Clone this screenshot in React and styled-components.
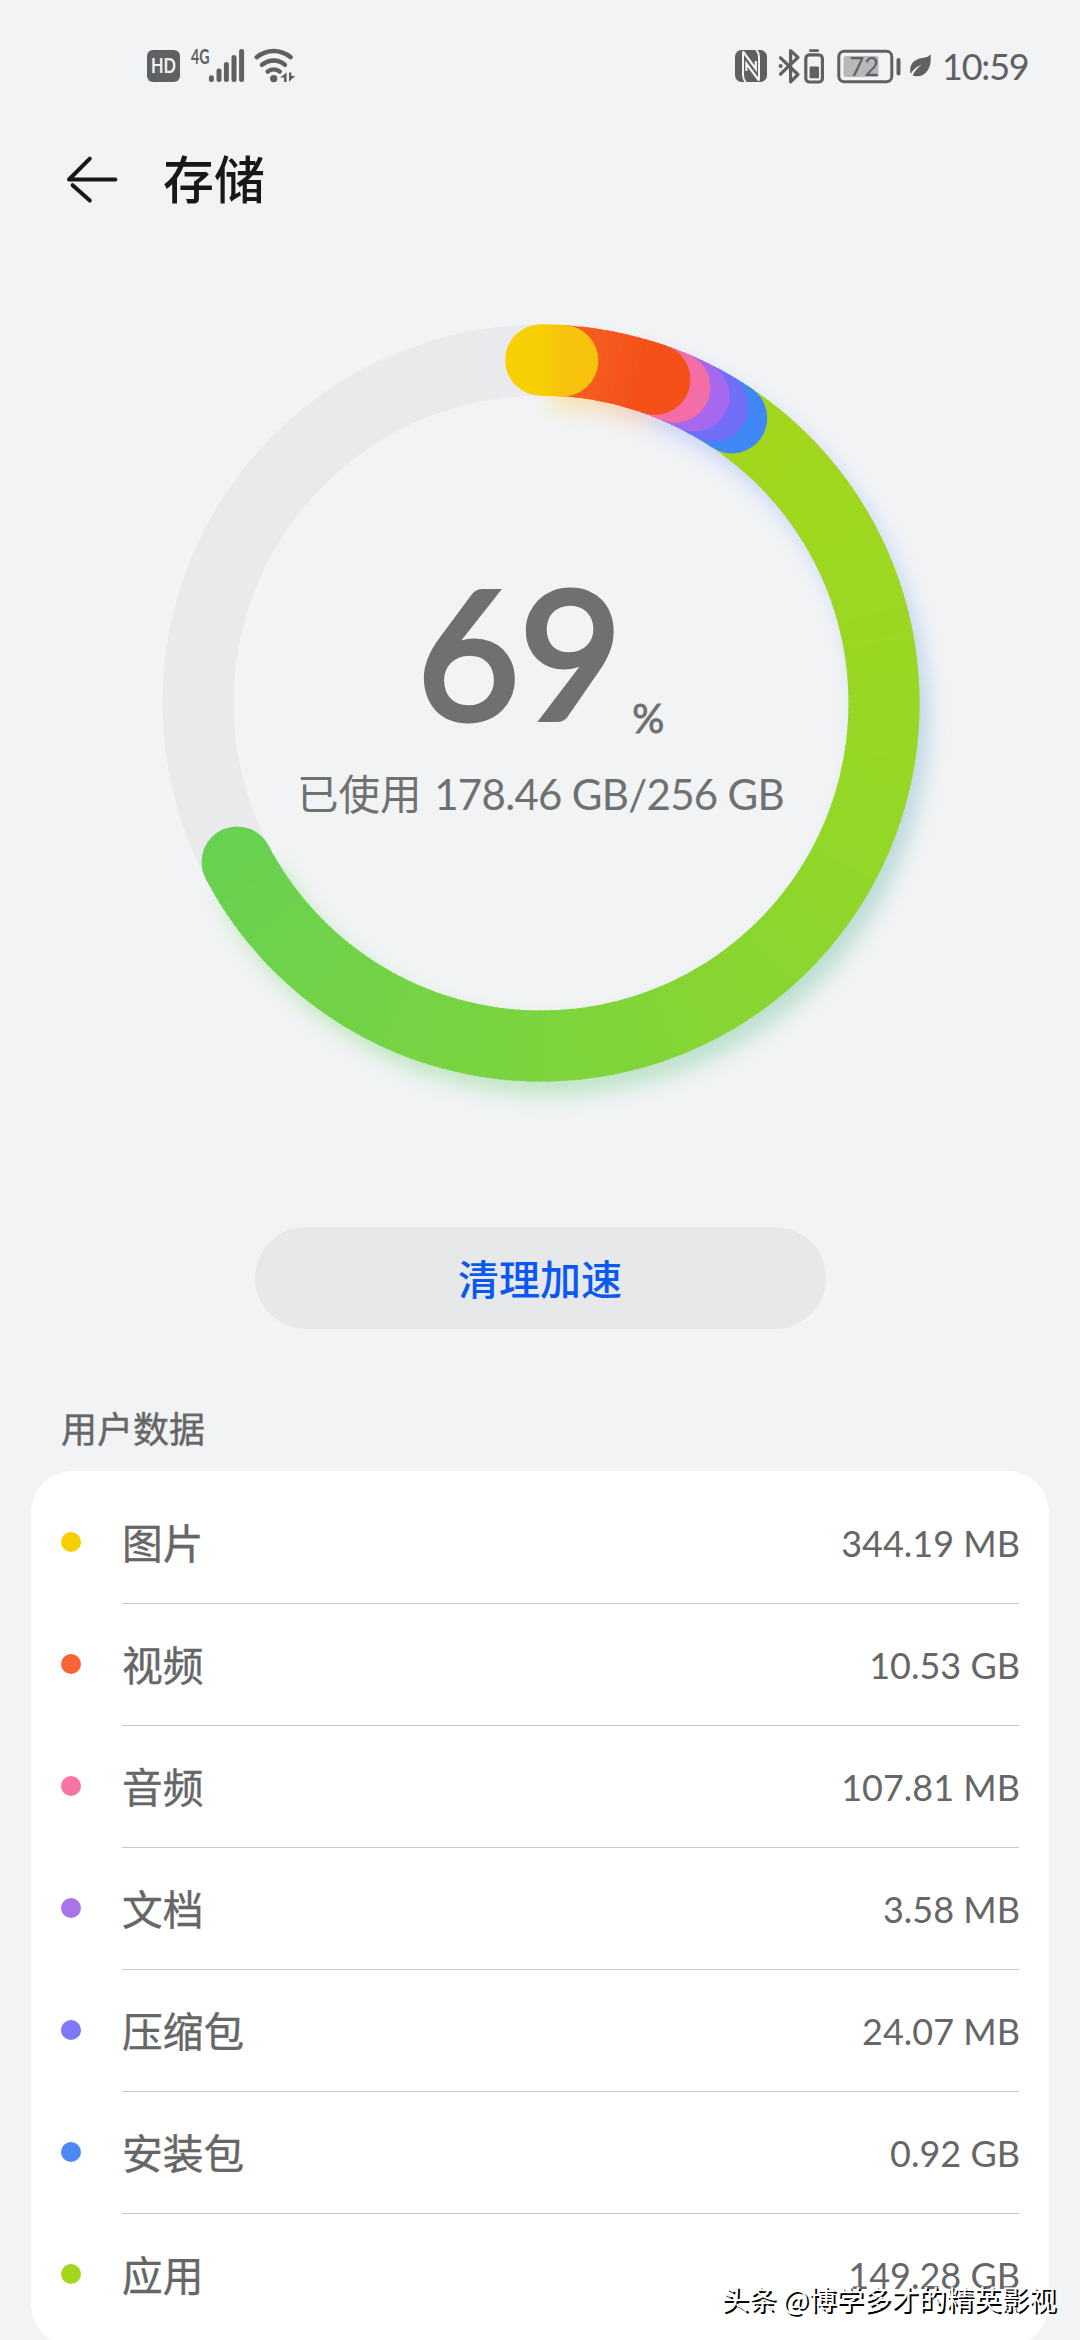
import styled, { createGlobalStyle } from "styled-components";

const categories = [
  { name: "图片", size: "344.19 MB", color: "#f7cf00" },
  { name: "视频", size: "10.53 GB", color: "#f86434" },
  { name: "音频", size: "107.81 MB", color: "#f873a6" },
  { name: "文档", size: "3.58 MB", color: "#a974ea" },
  { name: "压缩包", size: "24.07 MB", color: "#7d79f8" },
  { name: "安装包", size: "0.92 GB", color: "#4b8af3" },
  { name: "应用", size: "149.28 GB", color: "#a5d61d" },
];

const RADIUS = 343;
const CENTER = 400;

// drawn from the last one to the first, so each cap lies over the next arc
const segments = [
  { from: 30, to: 242.4, stops: [[34, "#a4d71c"], [110, "#94d727"], [180, "#7cd43d"], [242, "#69d150"]] },
  { from: 27, to: 33.8, stops: [[0, "#4188f7"]] },
  { from: 23, to: 30.1, stops: [[0, "#716ff8"]] },
  { from: 19, to: 26.5, stops: [[0, "#a568ef"]] },
  { from: 15, to: 23, stops: [[0, "#f36da6"]] },
  { from: 3, to: 19.4, stops: [[8, "#f65c20"], [17, "#f45018"]] },
];

const shadowStops = [
  [0, "#f8e070"],
  [8, "#fbc890"],
  [14, "#f9b08c"],
  [21, "#a9bcff"],
  [60, "#a3c1f8"],
  [90, "#93c0d8"],
  [130, "#92ccb4"],
  [180, "#98dba0"],
  [242, "#9be28c"],
];

function point(angle) {
  const rad = (angle * Math.PI) / 180;
  return [CENTER + RADIUS * Math.sin(rad), CENTER - RADIUS * Math.cos(rad)];
}

function arcPath(from, to) {
  const [x1, y1] = point(from);
  const [x2, y2] = point(to);
  return `M${x1} ${y1}A${RADIUS} ${RADIUS} 0 ${to - from > 180 ? 1 : 0} 1 ${x2} ${y2}`;
}

function channels(hex) {
  return [1, 3, 5].map((i) => parseInt(hex.slice(i, i + 2), 16));
}

function colorAt(stops, angle) {
  if (angle <= stops[0][0]) return stops[0][1];
  for (let i = 1; i < stops.length; i++) {
    if (angle <= stops[i][0]) {
      const [a, c1] = stops[i - 1];
      const [b, c2] = stops[i];
      const t = (angle - a) / (b - a);
      const end = channels(c2);
      return `rgb(${channels(c1).map((v, k) => Math.round(v + (end[k] - v) * t))})`;
    }
  }
  return stops[stops.length - 1][1];
}

function Arc({ from, to, stops, step = 1, cap = true }) {
  const slices = [];
  for (let a = from; a < to; a += step) {
    slices.push(
      <path
        key={a}
        d={arcPath(a, Math.min(a + step + 0.3, to))}
        stroke={colorAt(stops, a)}
      />
    );
  }
  const [x, y] = point(to);
  return (
    <g fill="none" strokeWidth="71">
      {cap && <circle cx={x} cy={y} r="35.5" fill={colorAt(stops, to)} />}
      {slices}
    </g>
  );
}

function StorageRing() {
  return (
    <RingArea>
      <svg width="800" height="800" viewBox="0 0 800 800">
        <defs>
          <filter id="soft" x="-10%" y="-10%" width="120%" height="120%">
            <feGaussianBlur stdDeviation="10" />
          </filter>
          <linearGradient id="pictures" gradientUnits="userSpaceOnUse" x1="399" y1="0" x2="420" y2="0">
            <stop offset="0" stopColor="#f6d002" />
            <stop offset="1" stopColor="#f7c30d" />
          </linearGradient>
        </defs>
        <circle cx={CENTER} cy={CENTER} r={RADIUS} fill="none" stroke="#e9eaec" strokeWidth="71" />
        <g filter="url(#soft)" opacity="0.55" transform="translate(9 14)">
          <Arc from={0} to={241} stops={shadowStops} step={3} cap={false} />
        </g>
        {segments.map((segment) => (
          <Arc key={segment.to} {...segment} />
        ))}
        <path d={arcPath(0, 3.6)} fill="none" stroke="url(#pictures)" strokeWidth="71.6" strokeLinecap="round" />
      </svg>
      <RingText>
        <Percent>
          <span>69</span>
          <small>%</small>
        </Percent>
        <Usage>
          已使用 <b>178.46 GB/256 GB</b>
        </Usage>
      </RingText>
    </RingArea>
  );
}

function StatusBar() {
  return (
    <Status>
      <StatusGroup>
        <Icon width="33" height="32" viewBox="0 0 33 32">
          <rect width="33" height="32" rx="6" fill="#5f6062" />
          <StatusText x="4" y="23.3" fontSize="20" textLength="25" lengthAdjust="spacingAndGlyphs" $color="#f1f3f5" $bold>
            HD
          </StatusText>
        </Icon>
        <Icon $gap="10px" width="56" height="36" viewBox="190 48 56 36">
          <StatusText x="191" y="63.8" fontSize="20.5" textLength="18.5" lengthAdjust="spacingAndGlyphs" $bold>
            4G
          </StatusText>
          <g stroke="#5f6062" strokeWidth="5" strokeLinecap="round">
            <path d="M211.4 77.8V79.4M219 71V79.4M226.4 64.4V79.4M234 57.6V79.4M241.6 51.5V79.4" />
          </g>
        </Icon>
        <Icon $gap="8px" width="42" height="36" viewBox="254 48 42 36">
          <g fill="none" stroke="#5f6062" strokeWidth="4.4" strokeLinecap="round">
            <path d="M256.7 57.2Q264.5 51 273.7 51T290.7 57.2" />
            <path d="M262 64.8Q267.3 60.5 273.7 60.5T285 64.8" />
            <path d="M267.6 71.6Q270 69.4 273.7 69.4T279.8 71.6" />
          </g>
          <circle cx="273.7" cy="78.6" r="3.7" fill="#5f6062" />
          <path d="M280 77.4L286.6 72.6V82H284V77.4ZM295.2 76L289 81.8V72.6H291.4V76Z" fill="#5f6062" />
        </Icon>
      </StatusGroup>
      <StatusGroup>
        <Icon width="32" height="32" viewBox="0 0 32 32">
          <rect width="32" height="32" rx="6.5" fill="#5f6062" />
          <g fill="none" stroke="#f1f3f5" strokeWidth="2">
            <path d="M8 1.5V25Q8 29 10.8 32.4" />
            <path d="M21.2 -0.4Q24 3 24 7V30.5" />
            <path d="M8 1.5L20.8 19V11" strokeWidth="2.2" />
            <path d="M11.4 21V13.5L24 30.5" strokeWidth="2.2" />
          </g>
        </Icon>
        <Icon $gap="11px" width="46" height="36" viewBox="777 48 46 36">
          <g fill="none" stroke="#5f6062" strokeWidth="3.2" strokeLinejoin="round" strokeLinecap="round">
            <path d="M779.5 57.8L797 74.5L789.6 81.8V50.6L797 57.4L779.5 74.2" />
            <rect x="804.8" y="54.8" width="16.6" height="27.2" rx="3.6" />
            <path d="M809.4 50.6H816.8" strokeWidth="2.6" />
          </g>
          <circle cx="779.6" cy="66" r="2" fill="#5f6062" />
          <rect x="808.6" y="66.6" width="9.4" height="11.6" rx="1" fill="#5f6062" />
        </Icon>
        <Icon $gap="12.5px" width="64" height="36" viewBox="835.5 48 64 36">
          <rect x="837.3" y="51.3" width="53" height="30.4" rx="5.4" fill="none" stroke="#5f6062" strokeWidth="3" />
          <rect x="842" y="56" width="35" height="21" rx="2.5" fill="#b6b8ba" />
          <rect x="895" y="58" width="4" height="17.6" rx="2" fill="#5f6062" />
          <StatusText x="848" y="76.4" fontSize="27.5" textLength="29.5" lengthAdjust="spacingAndGlyphs">
            72
          </StatusText>
        </Icon>
        <Icon $gap="9.5px" width="22" height="24" viewBox="909 55 22 24">
          <path
            d="M929.7 55.4Q930.5 66 926.6 71.4Q922.4 77.2 916 77.3Q913 77.4 911.6 76.6Q914.4 70.6 920.8 65.6Q912.4 69.4 909.7 75Q907.6 66.2 913.4 62Q917.4 59.4 922.4 58.8Q927 58.2 929.7 55.4Z"
            fill="#5f6062"
          />
        </Icon>
        <Clock>10:59</Clock>
      </StatusGroup>
    </Status>
  );
}

export default function App() {
  return (
    <Page>
      <GlobalStyle />
      <StatusBar />
      <Header>
        <svg width="52" height="48" viewBox="66 156 52 48">
          <g fill="none" stroke="#17181a" strokeWidth="4" strokeLinecap="round" strokeLinejoin="round">
            <path d="M115.4 179.5H69L89.8 158.6" />
            <path d="M72.6 185.2L89.8 200.6" />
          </g>
        </svg>
        <h1>存储</h1>
      </Header>
      <StorageRing />
      <CleanButton>清理加速</CleanButton>
      <SectionTitle>用户数据</SectionTitle>
      <Card>
        {categories.map((category) => (
          <Row key={category.name}>
            <Dot $color={category.color} />
            <RowContent>
              <Name>{category.name}</Name>
              <Size>{category.size}</Size>
            </RowContent>
          </Row>
        ))}
      </Card>
      <Watermark>头条 @博学多才的精英影视</Watermark>
    </Page>
  );
}

const GlobalStyle = createGlobalStyle`
  body {
    margin: 0;
    background-color: #f1f3f5;
  }

  svg {
    display: block;
    flex-shrink: 0;
    overflow: visible;
  }
`;

const Page = styled.div`
  position: relative;
  display: flex;
  flex-direction: column;
  width: 1080px;
  height: 2340px;
  overflow: hidden;
  background-color: #f1f3f5;
  font-family: Lato, "Noto Sans CJK SC", sans-serif;
  color: #666666;
`;

const Status = styled.div`
  display: flex;
  justify-content: space-between;
  flex-shrink: 0;
  height: 132px;
  box-sizing: border-box;
  padding: 0 49px 0 147px;
`;

const StatusGroup = styled.div`
  display: flex;
  align-items: center;
  height: 132px;
`;

const Icon = styled.svg`
  margin-left: ${(props) => props.$gap || "0"};
`;

const StatusText = styled.text`
  font-family: Lato, sans-serif;
  font-weight: ${(props) => (props.$bold ? 700 : 400)};
  fill: ${(props) => props.$color || "#5f6062"};
`;

const Clock = styled.span`
  width: 89px;
  margin-left: 10px;
  font-size: 36px;
  line-height: 44px;
  letter-spacing: -1.2px;
  color: #5f6062;
`;

const Header = styled.div`
  display: flex;
  align-items: center;
  flex-shrink: 0;
  gap: 45px;
  height: 96px;
  padding-left: 66px;

  h1 {
    margin: 0;
    font-size: 51px;
    line-height: 60px;
    font-weight: 500;
    color: #17181a;
  }
`;

const RingArea = styled.div`
  position: relative;
  flex-shrink: 0;
  width: 800px;
  height: 800px;
  margin: 75px 0 0 140.5px;
`;

const RingText = styled.div`
  position: absolute;
  top: 262px;
  left: 0;
  width: 800px;
  display: flex;
  flex-direction: column;
  align-items: center;
  color: #6f7170;
`;

const Percent = styled.div`
  display: flex;
  align-items: flex-end;

  span {
    font-size: 178px;
    line-height: 172px;
    font-weight: 400;
    letter-spacing: -1px;
    -webkit-text-stroke: 5px #6f7170;
  }

  small {
    margin-left: 11px;
    font-size: 40px;
    line-height: 38px;
    font-weight: 400;
    -webkit-text-stroke: 0.8px #6f7170;
  }
`;

const Usage = styled.div`
  margin-top: 27px;
  font-size: 41.5px;
  line-height: 60px;
  white-space: nowrap;

  b {
    margin-left: 2px;
    font-size: 42px;
    font-weight: 400;
    letter-spacing: -0.7px;
  }
`;

const CleanButton = styled.button`
  flex-shrink: 0;
  align-self: center;
  width: 571px;
  height: 102px;
  margin-top: 124px;
  border: 0;
  padding: 0 0 2px;
  border-radius: 51px;
  background-color: #e6e8ea;
  font-family: inherit;
  font-size: 41px;
  font-weight: 500;
  color: #0b58f0;
`;

const SectionTitle = styled.div`
  flex-shrink: 0;
  margin: 73px 0 0 61px;
  font-size: 36px;
  line-height: 54px;
  height: 69px;
  -webkit-text-stroke: 0.4px #666666;
`;

const Card = styled.div`
  flex-shrink: 0;
  width: 1018px;
  box-sizing: border-box;
  margin-left: 31px;
  padding: 11px 30px 10px;
  border-radius: 42px;
  background-color: #ffffff;
`;

const Row = styled.div`
  display: flex;
  align-items: center;
  height: 122px;
`;

const Dot = styled.div`
  width: 20px;
  height: 20px;
  margin-bottom: 2px;
  border-radius: 50%;
  background-color: ${(props) => props.$color};
`;

const RowContent = styled.div`
  display: flex;
  align-items: center;
  justify-content: space-between;
  flex: 1;
  height: 100%;
  box-sizing: border-box;
  margin-left: 41px;
  border-bottom: 1px solid #c9c9c9;

  ${Row}:last-child & {
    border-bottom-color: transparent;
  }
`;

const Name = styled.span`
  padding-bottom: 2px;
  font-size: 40.7px;
  -webkit-text-stroke: 0.4px #666666;
`;

const Size = styled.span`
  margin-right: -1px;
  font-size: 36px;
`;

const Watermark = styled.div`
  position: absolute;
  right: 24px;
  top: 2278px;
  font-family: "Noto Sans CJK SC", sans-serif;
  font-size: 27.5px;
  line-height: 40px;
  color: #ffffff;
  text-shadow: 2px 2px 0 #000000;
  white-space: nowrap;
`;
